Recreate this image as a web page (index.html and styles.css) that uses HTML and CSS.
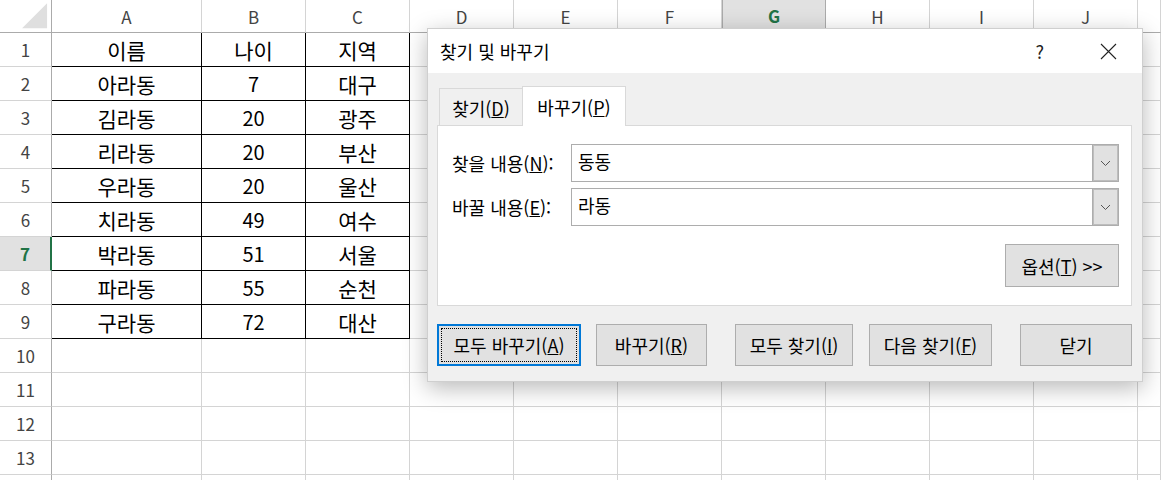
FILE: index.html
```html
<!DOCTYPE html>
<html lang="ko">
<head>
<meta charset="utf-8">
<title>찾기 및 바꾸기</title>
<link rel="stylesheet" href="styles.css">
</head>
<body>
<div class="sheet">
  <div class="ch corner"><svg width="52" height="33" viewBox="0 0 52 33"><polygon points="22.5,28.5 48,28.5 48,3" fill="#dfdfdf"/></svg></div>
  <div class="ch">A</div><div class="ch">B</div><div class="ch">C</div><div class="ch">D</div><div class="ch">E</div><div class="ch">F</div><div class="ch sel">G</div><div class="ch">H</div><div class="ch">I</div><div class="ch">J</div><div class="ch"></div>

  <div class="rh">1</div><div class="c b">이름</div><div class="c b">나이</div><div class="c b">지역</div><div class="c"></div><div class="c"></div><div class="c"></div><div class="c"></div><div class="c"></div><div class="c"></div><div class="c"></div><div class="c"></div>
  <div class="rh">2</div><div class="c b">아라동</div><div class="c b n">7</div><div class="c b">대구</div><div class="c"></div><div class="c"></div><div class="c"></div><div class="c"></div><div class="c"></div><div class="c"></div><div class="c"></div><div class="c"></div>
  <div class="rh">3</div><div class="c b">김라동</div><div class="c b n">20</div><div class="c b">광주</div><div class="c"></div><div class="c"></div><div class="c"></div><div class="c"></div><div class="c"></div><div class="c"></div><div class="c"></div><div class="c"></div>
  <div class="rh">4</div><div class="c b">리라동</div><div class="c b n">20</div><div class="c b">부산</div><div class="c"></div><div class="c"></div><div class="c"></div><div class="c"></div><div class="c"></div><div class="c"></div><div class="c"></div><div class="c"></div>
  <div class="rh">5</div><div class="c b">우라동</div><div class="c b n">20</div><div class="c b">울산</div><div class="c"></div><div class="c"></div><div class="c"></div><div class="c"></div><div class="c"></div><div class="c"></div><div class="c"></div><div class="c"></div>
  <div class="rh">6</div><div class="c b">치라동</div><div class="c b n">49</div><div class="c b">여수</div><div class="c"></div><div class="c"></div><div class="c"></div><div class="c"></div><div class="c"></div><div class="c"></div><div class="c"></div><div class="c"></div>
  <div class="rh sel">7</div><div class="c b">박라동</div><div class="c b n">51</div><div class="c b">서울</div><div class="c"></div><div class="c"></div><div class="c"></div><div class="c"></div><div class="c"></div><div class="c"></div><div class="c"></div><div class="c"></div>
  <div class="rh">8</div><div class="c b">파라동</div><div class="c b n">55</div><div class="c b">순천</div><div class="c"></div><div class="c"></div><div class="c"></div><div class="c"></div><div class="c"></div><div class="c"></div><div class="c"></div><div class="c"></div>
  <div class="rh">9</div><div class="c b">구라동</div><div class="c b n">72</div><div class="c b">대산</div><div class="c"></div><div class="c"></div><div class="c"></div><div class="c"></div><div class="c"></div><div class="c"></div><div class="c"></div><div class="c"></div>
  <div class="rh">10</div><div class="c"></div><div class="c"></div><div class="c"></div><div class="c"></div><div class="c"></div><div class="c"></div><div class="c"></div><div class="c"></div><div class="c"></div><div class="c"></div><div class="c"></div>
  <div class="rh">11</div><div class="c"></div><div class="c"></div><div class="c"></div><div class="c"></div><div class="c"></div><div class="c"></div><div class="c"></div><div class="c"></div><div class="c"></div><div class="c"></div><div class="c"></div>
  <div class="rh">12</div><div class="c"></div><div class="c"></div><div class="c"></div><div class="c"></div><div class="c"></div><div class="c"></div><div class="c"></div><div class="c"></div><div class="c"></div><div class="c"></div><div class="c"></div>
  <div class="rh">13</div><div class="c"></div><div class="c"></div><div class="c"></div><div class="c"></div><div class="c"></div><div class="c"></div><div class="c"></div><div class="c"></div><div class="c"></div><div class="c"></div><div class="c"></div>
  <div class="rh last"></div><div class="c last"></div><div class="c last"></div><div class="c last"></div><div class="c last"></div><div class="c last"></div><div class="c last"></div><div class="c last"></div><div class="c last"></div><div class="c last"></div><div class="c last"></div><div class="c last"></div>
</div>

<div class="dialog">
  <div class="titlebar">
    <span class="title">찾기 및 바꾸기</span>
    <span class="help">?</span>
    <svg class="close" width="17" height="17" viewBox="0 0 17 17"><path d="M1 1 L16 16 M16 1 L1 16" stroke="#222" stroke-width="1.1" fill="none"/></svg>
  </div>
  <div class="body">
    <div class="tabs">
      <div class="tab">찾기(<u>D</u>)</div>
      <div class="tab active">바꾸기(<u>P</u>)</div>
    </div>
    <div class="panel">
      <div class="field">
        <span class="label">찾을 내용(<u>N</u>):</span>
        <div class="combo"><span class="val">동동</span><span class="drop"><svg width="11" height="7" viewBox="0 0 11 7"><path d="M1 1 L5.5 5.5 L10 1" stroke="#555" stroke-width="1" fill="none"/></svg></span></div>
      </div>
      <div class="field">
        <span class="label">바꿀 내용(<u>E</u>):</span>
        <div class="combo"><span class="val">라동</span><span class="drop"><svg width="11" height="7" viewBox="0 0 11 7"><path d="M1 1 L5.5 5.5 L10 1" stroke="#555" stroke-width="1" fill="none"/></svg></span></div>
      </div>
      <div class="optrow">
        <button class="btn opt">옵션(<u>T</u>) &gt;&gt;</button>
      </div>
    </div>
    <div class="btns">
      <div class="grp">
        <button class="btn focus w144"><span class="inner">모두 바꾸기(<u>A</u>)</span></button>
        <button class="btn w111">바꾸기(<u>R</u>)</button>
      </div>
      <div class="grp g2">
        <button class="btn w118">모두 찾기(<u>I</u>)</button>
        <button class="btn w123">다음 찾기(<u>F</u>)</button>
      </div>
      <button class="btn w112">닫기</button>
    </div>
  </div>
</div>
</body>
</html>
```

FILE: styles.css
```css
* { box-sizing: border-box; }
html, body { margin: 0; padding: 0; background: #fff; }
body {
  font-family: "Noto Sans CJK KR", "Noto Sans", sans-serif;
  width: 1161px; height: 480px; overflow: hidden; position: relative;
}
.sheet {
  display: grid;
  grid-template-columns: 52px 150px repeat(9, 104px) 1fr;
  grid-template-rows: 33px repeat(13, 34px) 5px;
}
.sheet > div {
  border-right: 1px solid #d4d4d4;
  border-bottom: 1px solid #d4d4d4;
  display: flex; align-items: center; justify-content: center;
  overflow: hidden;
}
.sheet > div.last { border-bottom: none; }
.ch {
  border-bottom-color: #ababab !important;
  color: #444; font-size: 17px;
}
.ch.corner { align-items: stretch; justify-content: flex-start; border-right-color: #ababab !important; }
.ch.corner svg { display: block; }
.ch.sel {
  background: #e1e1e1; color: #217346; font-weight: bold;
  border-left: 1px solid #ababab; border-right-color: #ababab !important;
  border-bottom: 2px solid #217346 !important;
}
.rh {
  border-right-color: #ababab !important;
  color: #444; font-size: 17px;
}
.rh.sel {
  background: #e1e1e1; color: #217346; font-weight: bold;
  border-right: 2px solid #217346 !important;
}
.c { font-size: 21px; color: #000; }
.c.n { font-size: 20px; }
.c.b { border-right-color: #000 !important; border-bottom-color: #000 !important; }

.dialog {
  position: absolute; left: 427px; top: 28px;
  width: 716px; height: 354px;
  background: #f0f0f0;
  border: 1px solid #cfcfcf;
  box-shadow: 0 6px 22px rgba(0,0,0,0.28);
  color: #000;
  font-size: 18px;
}
.titlebar {
  height: 44px; background: #fff;
  display: flex; align-items: center;
  padding-left: 12px;
}
.title { font-size: 18px; }
.help { margin-left: auto; font-size: 18px; color: #222; margin-right: 56px; }
.close { margin-right: 25px; }
.body { padding: 13px 10px 0 9px; }
.tabs { display: flex; align-items: flex-end; height: 39px; padding-left: 2px; }
.tab {
  height: 37px; width: 83px;
  border: 1px solid #d9d9d9; border-bottom: none; border-right: none;
  display: flex; align-items: center; justify-content: center;
  font-size: 18px; padding-top: 2px;
}
.tab.active {
  height: 40px; width: 104px; background: #fff;
  border-right: 1px solid #d9d9d9;
  margin-bottom: -1px; position: relative; z-index: 1;
  padding-top: 0;
}
.panel {
  height: 181px; background: #fff;
  border: 1px solid #d9d9d9;
  padding: 18px 12px 0 14px;
}
.field { display: flex; align-items: center; height: 38px; margin-bottom: 6px; }
.label { width: 119px; font-size: 18px; }
.combo {
  width: 548px; height: 38px;
  border: 1px solid #adadad;
  display: flex; align-items: stretch;
}
.val { flex: 1; padding-left: 6px; font-size: 18px; display: flex; align-items: center; padding-bottom: 5px; }
.drop {
  width: 26px; background: #e1e1e1;
  border-left: 1px solid #adadad;
  box-shadow: inset 0 0 0 1px #bdbdbd;
  display: flex; align-items: center; justify-content: center;
}
.optrow { display: flex; justify-content: flex-end; margin-top: 18px; }
.btn {
  font-family: inherit; font-size: 18px; color: #000;
  background: #e1e1e1; border: 1px solid #adadad;
  height: 43px; padding: 0; margin: 0;
  display: flex; align-items: center; justify-content: center;
}
.opt { width: 114px; }
.btns { display: flex; margin-top: 18px; gap: 28px; }
.btns .btn { height: 42px; }
.grp { display: flex; gap: 15px; }
.grp.g2 { gap: 16px; }
.w144 { width: 144px; }
.w111 { width: 111px; }
.w118 { width: 118px; }
.w123 { width: 123px; }
.w112 { width: 112px; }
.btn.focus { border: 2px solid #0078d7; padding: 2px; align-items: stretch; }
.btn.focus .inner {
  flex: 1; border: 1px dotted #000;
  display: flex; align-items: center; justify-content: center;
}
```
